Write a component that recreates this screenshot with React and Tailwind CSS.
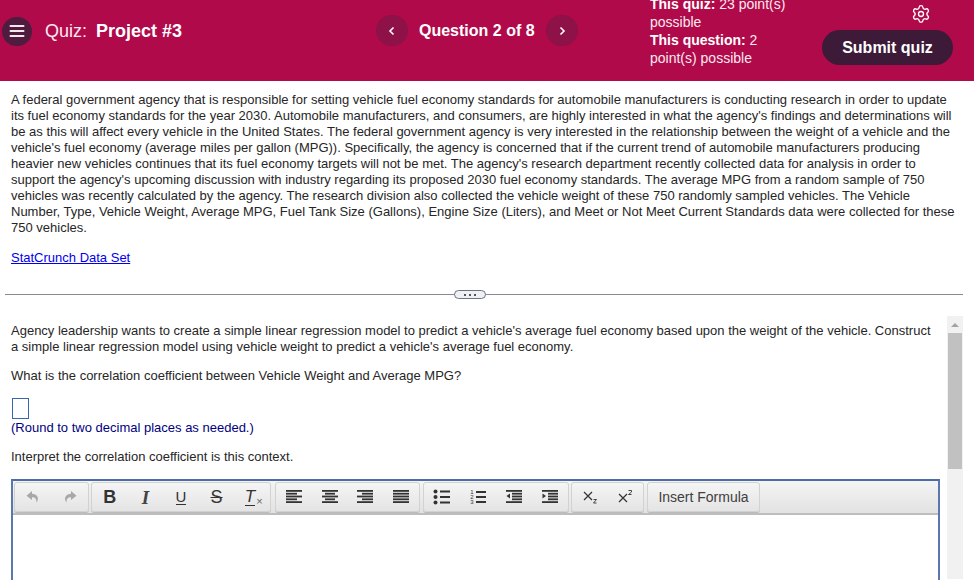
import React from "react";
import { Settings } from "lucide-react";

const passage = [
  "A federal government agency that is responsible for setting vehicle fuel economy standards for automobile manufacturers is conducting research in order to update",
  "its fuel economy standards for the year 2030. Automobile manufacturers, and consumers, are highly interested in what the agency's findings and determinations will",
  "be as this will affect every vehicle in the United States. The federal government agency is very interested in the relationship between the weight of a vehicle and the",
  "vehicle's fuel economy (average miles per gallon (MPG)). Specifically, the agency is concerned that if the current trend of automobile manufacturers producing",
  "heavier new vehicles continues that its fuel economy targets will not be met. The agency's research department recently collected data for analysis in order to",
  "support the agency's upcoming discussion with industry regarding its proposed 2030 fuel economy standards. The average MPG from a random sample of 750",
  "vehicles was recently calculated by the agency. The research division also collected the vehicle weight of these 750 randomly sampled vehicles. The Vehicle",
  "Number, Type, Vehicle Weight, Average MPG, Fuel Tank Size (Gallons), Engine Size (Liters), and Meet or Not Meet Current Standards data were collected for these",
  "750 vehicles.",
];

const Align = ({ rows }) => (
  <svg width="18" height="16" viewBox="0 0 18 16" fill="#333">
    {rows.map(([x, w], i) => (
      <rect key={i} x={x} y={1 + i * 2.8} width={w} height="1.8" />
    ))}
  </svg>
);

const Btn = ({ children }) => (
  <div className="flex h-full w-9 items-center justify-center">{children}</div>
);

const Group = ({ children, className = "" }) => (
  <div className={`flex h-[30px] items-center rounded-[3px] border border-[#d2d2d2] bg-gradient-to-b from-[#f5f5f5] to-[#e4e4e4] shadow-[0_1px_0_#bbb] ${className}`}>
    {children}
  </div>
);

const full = [[1, 16], [1, 16], [1, 16], [1, 16], [1, 16]];

export default function App() {
  return (
    <div className="relative h-[580px] w-[974px] overflow-hidden bg-white font-['Liberation_Sans',Arial,sans-serif] text-[13px] leading-4 text-[#262626]">
      <header className="flex h-[81px] items-start overflow-hidden bg-[#b00a4a] text-white">
        <div className="mt-[16px] ml-[2px] flex items-center">
          <div className="flex h-[29px] w-[30px] items-center justify-center rounded-full bg-[#4f1c40]">
            <svg width="16" height="14" viewBox="0 0 16 14" fill="#f3e6ec">
              <rect x="0.5" y="1" width="15" height="2" rx="1" />
              <rect x="0.5" y="6" width="15" height="2" rx="1" />
              <rect x="0.5" y="11" width="15" height="2" rx="1" />
            </svg>
          </div>
          <div className="ml-[13px] w-[137px] pt-[1px] text-[18px] leading-[29px] whitespace-nowrap text-[#fbe9f0]">
            Quiz:<span className="ml-[9px] font-bold text-white">Project #3</span>
          </div>
        </div>
        <div className="mt-[15px] ml-[194px] flex items-center">
          <div className="flex h-[31px] w-[32px] items-center justify-center rounded-full bg-[#8e1147]">
            <svg width="8" height="10" viewBox="0 0 8 10" fill="none" stroke="#fff" strokeWidth="1.6"><path d="M5.500 1.500 2 5l3.500 3.500" /></svg>
          </div>
          <div className="ml-[11px] w-[116px] text-[16px] leading-[29px] font-bold whitespace-nowrap">Question 2 of 8</div>
          <div className="ml-[11px] flex h-[31px] w-[32px] items-center justify-center rounded-full bg-[#8e1147]">
            <svg width="8" height="10" viewBox="0 0 8 10" fill="none" stroke="#fff" strokeWidth="1.6"><path d="M2.500 1.500 6 5 2.500 8.500" /></svg>
          </div>
        </div>
        <div className="mt-[-5px] ml-[72px] w-[150px] text-[14px] leading-[18px] text-[#fbe9f0]">
          <div><b className="text-white">This quiz:</b> 23 point(s)</div>
          <div>possible</div>
          <div><b className="text-white">This question:</b> 2</div>
          <div>point(s) possible</div>
        </div>
        <div className="ml-[22px] flex flex-col pt-[4px]">
          <Settings size={20} strokeWidth={1.6} color="#fff" className="ml-[89px]" />
          <div className="mt-[6px] flex h-[35px] w-[131px] items-center justify-center rounded-full bg-[#3d1a38] text-[16px] font-bold text-white">Submit quiz</div>
        </div>
      </header>

      <section className="px-[11px] pt-[11px]">
        {passage.map((l) => (
          <div key={l} className="whitespace-nowrap">{l}</div>
        ))}
        <a className="mt-[14px] block text-[#0000ee] underline">StatCrunch Data Set</a>
      </section>

      <div className="relative mt-[28px] ml-[5px] h-px w-[958px] bg-[#8a8a90]">
        <div className="absolute top-[-4px] left-[449px] flex h-[9px] w-[32px] items-center justify-center gap-[3px] rounded-full border border-[#6f7280] bg-[#eef0f6]">
          <span className="h-[2px] w-[2px] bg-[#555]" />
          <span className="h-[2px] w-[2px] bg-[#555]" />
          <span className="h-[2px] w-[2px] bg-[#555]" />
        </div>
      </div>

      <section className="flex pt-[21px]">
        <div className="w-[947px] pl-[11px]">
          <div className="pt-[7px] whitespace-nowrap">Agency leadership wants to create a simple linear regression model to predict a vehicle's average fuel economy based upon the weight of the vehicle. Construct</div>
          <div className="whitespace-nowrap">a simple linear regression model using vehicle weight to predict a vehicle's average fuel economy.</div>
          <div className="mt-[13px]">What is the correlation coefficient between Vehicle Weight and Average MPG?</div>
          <div className="mt-[14px] ml-px h-[21px] w-[17px] border border-[#3a66b0] bg-white" />
          <div className="mt-[1px] text-[#000080]">(Round to two decimal places as needed.)</div>
          <div className="mt-[13px]">Interpret the correlation coefficient is this context.</div>
          <div className="mt-[14px] h-[120px] w-[929px] border-2 border-b-0 border-[#5b78ad] border-t-[#4c6ca8] bg-white">
            <div className="flex h-[34px] items-center gap-[2px] border-b-2 border-[#bdbdbd] bg-gradient-to-b from-[#f4f4f4] to-[#e2e2e2] pl-[1px] text-[#333]">
              <Group className="w-[75px] justify-around">
                <svg width="16" height="14" viewBox="0 0 16 14" fill="#a8a8a8"><path d="M7 1 1.500 5.800 7 10V7.200c3 0 4.500 1.300 4.500 5.300 2-2.500 2.800-8-4.500-8.700Z" /></svg>
                <svg width="16" height="14" viewBox="0 0 16 14" fill="#a8a8a8"><path d="M9 1l5.500 4.800L9 10V7.200c-3 0-4.500 1.300-4.500 5.300-2-2.500-2.800-8 4.500-8.700Z" /></svg>
              </Group>
              <Group className="w-[180px]">
                <Btn><span className="text-[18px] leading-none font-bold">B</span></Btn>
                <Btn><span className="font-['Liberation_Serif',serif] text-[19px] leading-none font-bold text-[#444] italic">I</span></Btn>
                <Btn><span className="border-b-[1.5px] border-[#333] text-[15px] leading-[14px]">U</span></Btn>
                <Btn><span className="text-[18px] leading-none line-through">S</span></Btn>
                <Btn>
                  <span className="ml-[3px] flex items-end">
                    <span className="border-b-[1.5px] border-[#333] text-[17px] leading-[16px] italic">T</span>
                    <span className="ml-px text-[11px] leading-[10px] text-[#666]">×</span>
                  </span>
                </Btn>
              </Group>
              <Group className="ml-[2px] w-[145px]">
                <Btn><Align rows={[[1, 16], [1, 11], [1, 16], [1, 11], [1, 16]]} /></Btn>
                <Btn><Align rows={[[1, 16], [4, 10], [1, 16], [4, 10], [1, 16]]} /></Btn>
                <Btn><Align rows={[[1, 16], [6, 11], [1, 16], [6, 11], [1, 16]]} /></Btn>
                <Btn><Align rows={full} /></Btn>
              </Group>
              <Group className="ml-px w-[146px]">
                <Btn>
                  <svg width="18" height="16" viewBox="0 0 18 16" fill="#333">
                    <circle cx="2.500" cy="2.500" r="2" /><circle cx="2.500" cy="8" r="2" /><circle cx="2.500" cy="13.500" r="2" />
                    <rect x="7" y="1.500" width="10" height="2" /><rect x="7" y="7" width="10" height="2" /><rect x="7" y="12.500" width="10" height="2" />
                  </svg>
                </Btn>
                <Btn>
                  <div className="flex items-center gap-[2px]">
                    <span className="flex flex-col text-center text-[6px] leading-[5px]"><span>1</span><span>2</span><span>3</span></span>
                    <svg width="10" height="14" viewBox="0 0 10 14" fill="#333"><rect y="1" width="10" height="2" /><rect y="6" width="10" height="2" /><rect y="11" width="10" height="2" /></svg>
                  </div>
                </Btn>
                <Btn>
                  <svg width="18" height="16" viewBox="0 0 18 16" fill="#333">
                    <rect x="1" y="1" width="16" height="1.800" /><rect x="7" y="3.800" width="10" height="1.800" /><rect x="7" y="6.600" width="10" height="1.800" /><rect x="7" y="9.400" width="10" height="1.800" /><rect x="1" y="12.200" width="16" height="1.800" />
                    <path d="M5 4.500v5L1.500 7Z" />
                  </svg>
                </Btn>
                <Btn>
                  <svg width="18" height="16" viewBox="0 0 18 16" fill="#333">
                    <rect x="1" y="1" width="16" height="1.800" /><rect x="7" y="3.800" width="10" height="1.800" /><rect x="7" y="6.600" width="10" height="1.800" /><rect x="7" y="9.400" width="10" height="1.800" /><rect x="1" y="12.200" width="16" height="1.800" />
                    <path d="M1.500 4.500v5L5 7Z" />
                  </svg>
                </Btn>
              </Group>
              <Group className="w-[73px]">
                <Btn>
                  <svg width="16" height="16" viewBox="0 0 16 16" fill="none" stroke="#333">
                    <path d="M2 3l8 8M10 3l-8 8" strokeWidth="1.200" />
                    <path d="M11.500 10.500h3l-3 3.500h3" strokeWidth="0.900" />
                  </svg>
                </Btn>
                <Btn>
                  <svg width="16" height="16" viewBox="0 0 16 16" fill="none" stroke="#333">
                    <path d="M2 5l8 8M10 5l-8 8" strokeWidth="1.200" />
                    <path d="M11.500 1.500h3v1.500l-3 2.500h3" strokeWidth="0.900" />
                  </svg>
                </Btn>
              </Group>
              <Group className="ml-px w-[113px] justify-center text-[14px] text-[#404040]">Insert Formula</Group>
            </div>
          </div>
        </div>
        <div className="flex h-[263px] w-[16px] flex-col bg-[#f1f1f1]">
          <div className="flex h-[17px] items-center justify-center">
            <div className="h-0 w-0 border-x-[4px] border-b-[4px] border-x-transparent border-b-[#a3a3a3]" />
          </div>
          <div className="mx-[1px] h-[136px] bg-[#c1c1c1]" />
        </div>
      </section>
    </div>
  );
}
